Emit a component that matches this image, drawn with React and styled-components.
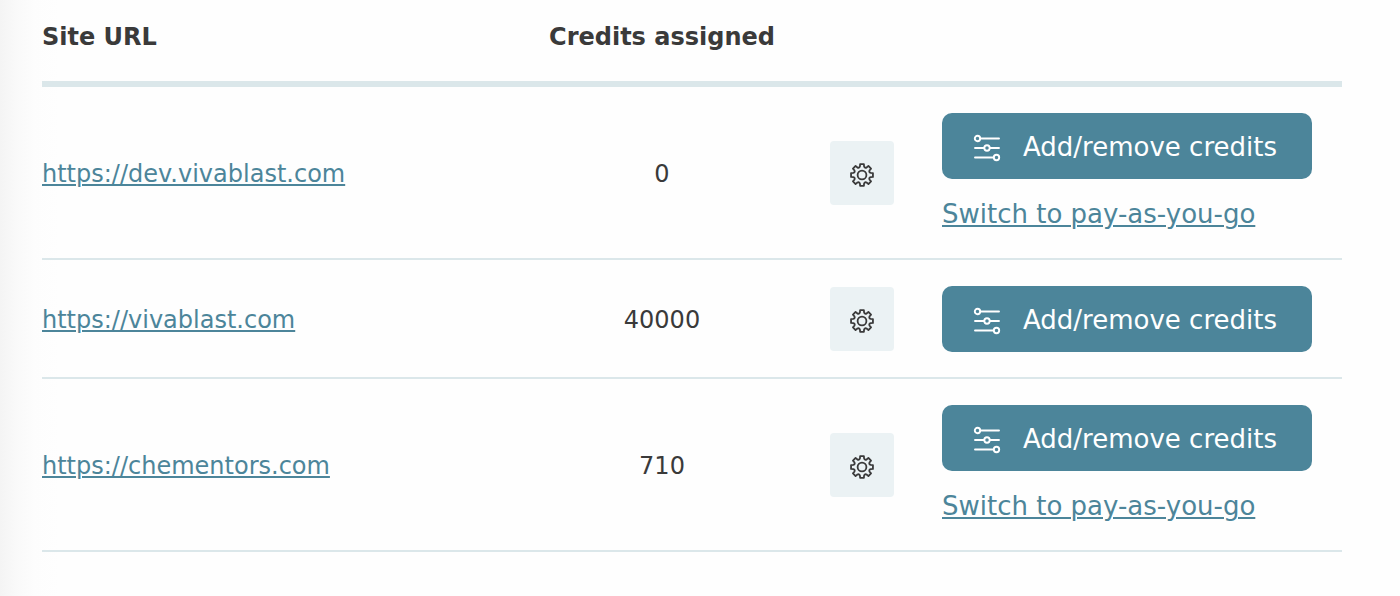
import React from 'react'
import styled, { createGlobalStyle, css } from 'styled-components'

const colors = {
  text: '#3a3a3a',
  primary: '#4c859a',
  line: '#dbe7ea',
  soft: '#ebf2f4'
}

const GlobalStyle = createGlobalStyle`
  * {
    box-sizing: border-box;
  }

  body {
    margin: 0;
    background: #fefefe;
    color: ${colors.text};
    font-family: Verdana, 'DejaVu Sans', sans-serif;
    font-size: 24px;
    line-height: 36px;
  }
`

const Page = styled.main`
  min-height: 100vh;
  padding: 0 58px 0 42px;
  background: linear-gradient(to right, #f4f4f4, #f9f9f9 16px, #fdfdfd 34px, #fefefe 60px);
`

const Table = styled.table`
  width: 100%;
  table-layout: fixed;
  border-spacing: 0;
`

const HeadCell = styled.th`
  width: ${({ $width }) => $width || 'auto'};
  padding: 19px 0 26px;
  border-bottom: 6px solid ${colors.line};
  text-align: ${({ $align }) => $align || 'left'};
  font-weight: bold;
  white-space: nowrap;
`

const Cell = styled.td`
  padding: 26px 0 25px;
  border-bottom: 2px solid ${colors.line};
  text-align: ${({ $align }) => $align || 'left'};
  vertical-align: middle;
`

const TextCell = styled(Cell)`
  padding-top: 28px;
`

const ActionsCell = styled(Cell)`
  padding-left: 24px;
  padding-right: 30px;
`

const linkStyle = css`
  color: ${colors.primary};
  text-decoration: underline;
  text-decoration-thickness: 2px;
  text-underline-offset: 2px;
`

const SiteLink = styled.a`
  ${linkStyle}
`

const SwitchLink = styled.a`
  ${linkStyle}
  display: block;
  margin: 17px 0 1px;
  font-size: 26px;
`

const SettingsButton = styled.button`
  display: inline-flex;
  align-items: center;
  justify-content: center;
  width: 64px;
  height: 64px;
  padding: 4px 0 0;
  border: 0;
  border-radius: 4px;
  background: ${colors.soft};
  color: ${colors.text};
  vertical-align: middle;
  cursor: pointer;
`

const CreditsButton = styled.button`
  display: flex;
  align-items: center;
  gap: 22px;
  width: 100%;
  height: 66px;
  padding: 2px 31px 0;
  border: 0;
  border-radius: 10px;
  background: ${colors.primary};
  color: #fff;
  font-family: inherit;
  font-size: 26px;
  line-height: 36px;
  white-space: nowrap;
  cursor: pointer;

  svg {
    flex: none;
    margin-top: 2px;
  }
`

const sites = [
  { url: 'https://dev.vivablast.com', credits: 0, canSwitch: true },
  { url: 'https://vivablast.com', credits: 40000, canSwitch: false },
  { url: 'https://chementors.com', credits: 710, canSwitch: true }
]

// Outline of a cog with eight teeth and rounded gaps, centred on 0,0
const cogPath = () => {
  const step = Math.PI / 4
  const point = (radius, angle) =>
    `${(radius * Math.cos(angle)).toFixed(2)} ${(radius * Math.sin(angle)).toFixed(2)}`

  const teeth = Array.from({ length: 8 }, (_, i) => {
    const a = i * step
    return [
      `${point(9, a - 0.23)}`,
      `L${point(11.1, a - 0.17)}`,
      `L${point(11.1, a + 0.17)}`,
      `L${point(9, a + 0.23)}`,
      `Q${point(7, a + step / 2)} `
    ].join(' ')
  })

  return `M${teeth.join('')}${point(9, -0.23)} Z`
}

const CogIcon = () => (
  <svg
    width="26"
    height="26"
    viewBox="-13 -13 26 26"
    fill="none"
    stroke="currentColor"
    strokeWidth="1.8"
    strokeLinejoin="round"
    aria-hidden="true"
  >
    <path d={cogPath()} />
    <circle r="4.4" />
  </svg>
)

const SlidersIcon = () => (
  <svg
    width="28"
    height="28"
    viewBox="0 0 28 28"
    fill="none"
    stroke="currentColor"
    strokeWidth="1.9"
    strokeLinecap="round"
    aria-hidden="true"
  >
    <path d="M7.5 4.5H26M2 14H11M17 14H26M2 23.5H20.5" />
    <circle cx="4.5" cy="4.5" r="2.7" />
    <circle cx="14" cy="14" r="2.7" />
    <circle cx="23.5" cy="23.5" r="2.7" />
  </svg>
)

const SiteRow = ({ url, credits, canSwitch }) => (
  <tr>
    <TextCell>
      <SiteLink href={url}>{url}</SiteLink>
    </TextCell>
    <TextCell $align="center">{credits}</TextCell>
    <Cell $align="center">
      <SettingsButton type="button" aria-label={`Settings for ${url}`}>
        <CogIcon />
      </SettingsButton>
    </Cell>
    <ActionsCell>
      <CreditsButton type="button">
        <SlidersIcon />
        Add/remove credits
      </CreditsButton>
      {canSwitch && <SwitchLink href="#switch">Switch to pay-as-you-go</SwitchLink>}
    </ActionsCell>
  </tr>
)

export default function App() {
  return (
    <>
      <GlobalStyle />
      <Page>
        <Table>
          <thead>
            <tr>
              <HeadCell scope="col">Site URL</HeadCell>
              <HeadCell scope="col" $width="288px" $align="center">
                Credits assigned
              </HeadCell>
              <HeadCell as="td" $width="112px" />
              <HeadCell as="td" $width="424px" />
            </tr>
          </thead>
          <tbody>
            {sites.map(site => (
              <SiteRow key={site.url} {...site} />
            ))}
          </tbody>
        </Table>
      </Page>
    </>
  )
}
